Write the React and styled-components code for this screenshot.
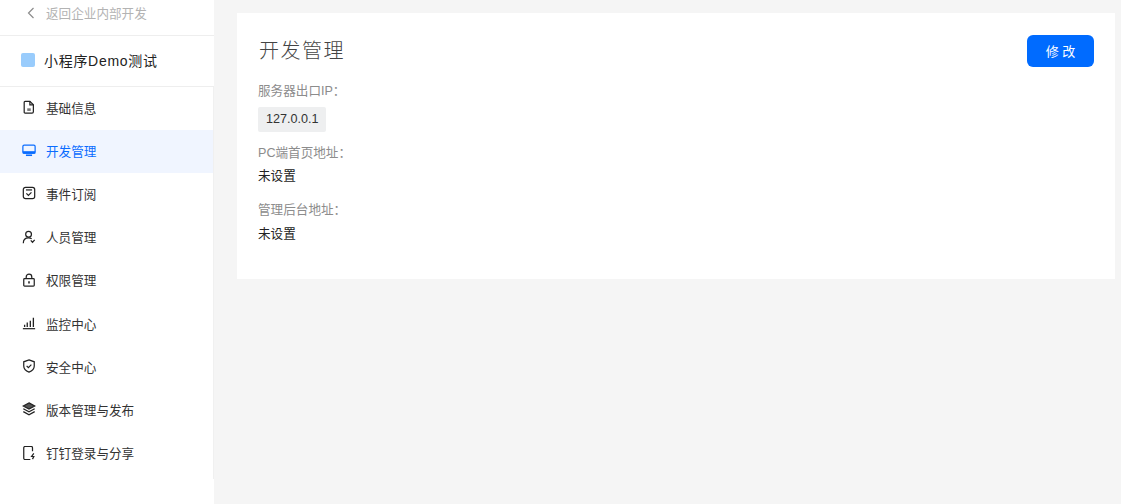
import styled, { createGlobalStyle } from "styled-components";

const GlobalStyle = createGlobalStyle`
  html, body {
    margin: 0;
    padding: 0;
    height: 100%;
    overflow: hidden;
    background: #f5f5f5;
    font-family: "Liberation Sans", "Noto Sans CJK SC", sans-serif;
  }
  * {
    box-sizing: border-box;
  }
`;

const icons = {
  file: (
    <>
      <path d="M3.500 1.500h5.500l4 4v8a1.500 1.500 0 0 1-1.500 1.500h-8a1 1 0 0 1-1-1v-11.500a1 1 0 0 1 1-1z" />
      <path d="M9 1.500v4h4" />
      <path d="M6 9.500h4v3h-4z" fill="#777" stroke="none" />
    </>
  ),
  monitor: (
    <>
      <rect x="1" y="2.500" width="14" height="9" rx="1.500" />
      <path d="M1.500 10h13v1.500h-13z" fill="currentColor" />
      <path d="M4.500 14h7" strokeWidth="1.800" />
    </>
  ),
  calendar: (
    <>
      <rect x="1.500" y="1.500" width="13" height="13" rx="2.500" />
      <path d="M4.500 4.500h7" />
      <path d="M5 8.500l2.300 2.300 3.500-3.500" />
    </>
  ),
  user: (
    <>
      <circle cx="7.500" cy="4.800" r="3.300" />
      <path d="M1.500 15c0-3.500 2.200-6 6-6 1.500 0 2.700.4 3.500 1.200" />
      <path d="M10 11.800l2 2.200 2.500-2.800" />
    </>
  ),
  lock: (
    <>
      <rect x="2" y="6.500" width="12" height="8.500" rx="1" />
      <path d="M4.800 6.500v-2a3.200 3.200 0 0 1 6.400 0v2" />
      <path d="M8 9.500v2.500" strokeWidth="1.800" />
    </>
  ),
  chart: (
    <>
      <path d="M1 14.500h14" />
      <path d="M3 12.500v-2.500M6 12.500v-5M9.500 12.500v-7M13 12.500v-10.500" strokeWidth="1.500" />
    </>
  ),
  shield: (
    <>
      <path d="M8 1l6 2.200v4.800c0 3.200-2.700 5.800-6 7-3.300-1.200-6-3.800-6-7v-4.800z" />
      <path d="M5.300 7.800l2 2 3.400-3.400" />
    </>
  ),
  layers: (
    <>
      <path d="M8 1l6.500 3.500-6.500 3.500-6.500-3.500z" fill="#555" />
      <path d="M1.500 7.700l6.500 3.500 6.500-3.500" />
      <path d="M1.500 11l6.500 3.500 6.500-3.500" />
    </>
  ),
  phone: (
    <>
      <path d="M9.500 15.500h-6a1.500 1.500 0 0 1-1.500-1.500v-12a1.500 1.500 0 0 1 1.500-1.500h7a1.500 1.500 0 0 1 1.500 1.500v4" />
      <path d="M13.500 8.500l-2.500 3.500h2.500l-1.500 3" strokeWidth="1.400" />
    </>
  ),
};

const menu = [
  { key: "file", label: "基础信息" },
  { key: "monitor", label: "开发管理", active: true },
  { key: "calendar", label: "事件订阅" },
  { key: "user", label: "人员管理" },
  { key: "lock", label: "权限管理" },
  { key: "chart", label: "监控中心" },
  { key: "shield", label: "安全中心" },
  { key: "layers", label: "版本管理与发布" },
  { key: "phone", label: "钉钉登录与分享" },
];

export default function App() {
  return (
    <Page>
      <GlobalStyle />
      <Sidebar>
        <BackRow>
          <svg width="10" height="12" viewBox="0 0 10 12" fill="none" stroke="#8c8c8c" strokeWidth="1.200">
            <path d="M7.500 1l-5 5 5 5" />
          </svg>
          <span>返回企业内部开发</span>
        </BackRow>
        <AppRow>
          <AppLogo />
          <span>小程序Demo测试</span>
        </AppRow>
        <Menu>
          {menu.map((item) => (
            <MenuItem key={item.key} $active={item.active}>
              <svg width="14" height="14" viewBox="0 0 16 16" fill="none" stroke="currentColor" strokeWidth="1.400">
                {icons[item.key]}
              </svg>
              <span>{item.label}</span>
            </MenuItem>
          ))}
        </Menu>
      </Sidebar>
      <Content>
        <Card>
          <CardHead>
            <Title>开发管理</Title>
            <EditButton>修 改</EditButton>
          </CardHead>
          <Label>服务器出口IP：</Label>
          <IpTag>127.0.0.1</IpTag>
          <Label $gap="11px">PC端首页地址：</Label>
          <Value>未设置</Value>
          <Label $gap="14px">管理后台地址：</Label>
          <Value $gap="4px">未设置</Value>
        </Card>
      </Content>
    </Page>
  );
}

const Page = styled.div`
  display: flex;
  height: 504px;
  background: #f5f5f5;
`;
const Sidebar = styled.aside`
  width: 214px;
  flex-shrink: 0;
  height: 504px;
  background: #fff;
`;
const BackRow = styled.div`
  display: flex;
  align-items: center;
  gap: 10px;
  height: 36px;
  padding: 0 0 10px 26px;
  border-bottom: 1px solid #eeeeee;
  font-size: 12.6px;
  color: #b3b3b3;
`;
const AppRow = styled.div`
  display: flex;
  align-items: center;
  gap: 9px;
  height: 51px;
  padding: 0 0 2px 21px;
  border-bottom: 1px solid #eeeeee;
  font-size: 14px;
  letter-spacing: 0.7px;
  color: #222;
`;
const AppLogo = styled.div`
  width: 14px;
  height: 14px;
  border-radius: 2px;
  background: #99ccfc;
`;
const Menu = styled.nav`
  display: flex;
  flex-direction: column;
  height: 392px;
  border-right: 1px solid #f0f0f0;
`;
const MenuItem = styled.div`
  display: flex;
  align-items: center;
  gap: 10px;
  height: 43.2px;
  padding: 0 0 3px 22px;
  font-size: 12.6px;
  color: ${(p) => (p.$active ? "#0a6cff" : "#333")};
  background: ${(p) => (p.$active ? "#f0f5ff" : "transparent")};
  svg {
    flex-shrink: 0;
    color: ${(p) => (p.$active ? "#0a6cff" : "#222")};
  }
`;
const Content = styled.main`
  flex: 1;
  padding: 13px 6px 0 23px;
`;
const Card = styled.section`
  height: 266px;
  padding: 22px 21px 0 21px;
  background: #fff;
`;
const CardHead = styled.div`
  display: flex;
  justify-content: space-between;
  align-items: flex-start;
  height: 46px;
`;
const Title = styled.h2`
  margin: 0;
  padding-left: 1px;
  font-size: 20px;
  line-height: 32px;
  font-weight: 300;
  letter-spacing: 1.5px;
  color: #444;
`;
const EditButton = styled.button`
  width: 67px;
  height: 32px;
  padding: 0 0 2px;
  border: none;
  border-radius: 6px;
  background: #006bff;
  color: #fff;
  font-family: inherit;
  font-size: 13px;
`;
const Label = styled.div`
  margin-top: ${(p) => p.$gap || "0"};
  font-size: 12.6px;
  line-height: 20px;
  color: #8c8c8c;
`;
const IpTag = styled.div`
  display: table;
  margin-top: 6px;
  padding: 0 7.5px 0 8px;
  height: 25px;
  line-height: 25px;
  border-radius: 2px;
  background: #eeeff0;
  font-size: 12.6px;
  color: #333;
`;
const Value = styled.div`
  margin-top: ${(p) => p.$gap || "3px"};
  font-size: 12.6px;
  line-height: 20px;
  color: #222;
`;
